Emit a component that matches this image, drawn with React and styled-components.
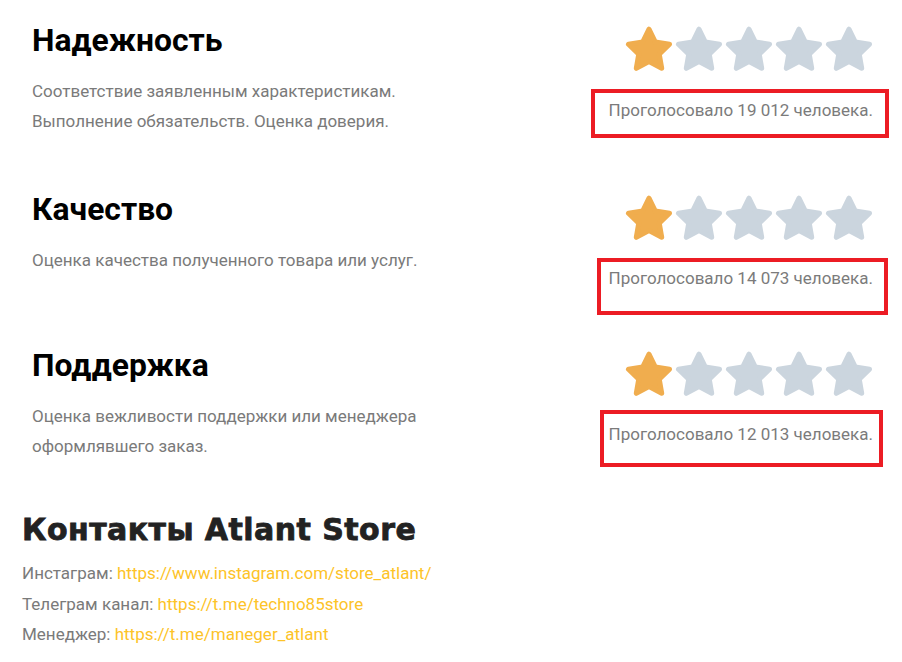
import React from "react";
import styled, { createGlobalStyle } from "styled-components";

const Global = createGlobalStyle`
  html, body { margin: 0; padding: 0; background: #fff; }
  body { font-family: Roboto, "Noto Sans", sans-serif; }
`;

const Page = styled.div`
  width: 902px;
  height: 662px;
  box-sizing: border-box;
  padding: 22px 13px 0 22px;
  overflow: hidden;
`;

const Ratings = styled.div`
  display: flex;
  flex-direction: column;
  padding-left: 10px;
`;

const Section = styled.section`
  display: flex;
  justify-content: space-between;
  align-items: flex-start;
  margin-top: ${(p) => p.$gap || 0}px;
`;

const Info = styled.div`
  display: flex;
  flex-direction: column;
`;

const Title = styled.h2`
  margin: 0;
  font-family: Roboto, sans-serif;
  font-weight: 700;
  font-size: 31.8px;
  line-height: 36px;
  color: #000;
`;

const Desc = styled.p`
  margin: 18px 0 0;
  font-size: 17px;
  line-height: 30px;
  color: #7a7a7a;
`;

const Side = styled.div`
  display: flex;
  flex-direction: column;
  align-items: flex-end;
`;

const Stars = styled.div`
  display: flex;
  gap: 2px;
  margin: 4px 16px 0 0;
`;

const VoteBox = styled.div`
  border: 4px solid #ec1c24;
  margin-top: ${(p) => p.$top}px;
  margin-right: ${(p) => p.$right}px;
  padding: ${(p) => p.$pad};
  font-size: 17px;
  line-height: 20px;
  color: #7b7b7b;
  white-space: nowrap;
`;

const Contacts = styled.div`
  margin-top: 45px;
`;

const ContactsTitle = styled.h2`
  margin: 0;
  font-family: "DejaVu Sans", "Liberation Sans", sans-serif;
  font-weight: 700;
  font-size: 30px;
  line-height: 36px;
  color: #222;
  -webkit-text-stroke: 0.8px #222;
  letter-spacing: 0.45px;
`;

const ContactList = styled.div`
  margin-top: 10px;
  display: flex;
  flex-direction: column;
`;

const ContactLine = styled.div`
  font-size: 17px;
  line-height: 30.5px;
  color: #7a7a7a;
`;

const Link = styled.a`
  color: #fdc328;
  text-decoration: none;
`;

const StarIcon = ({ on }) => (
  <svg width="48" height="48" viewBox="0 0 24 24">
    <polygon
      points="12,1.6 15.17,8.03 22.27,9.06 17.13,14.07 18.35,21.14 12,17.8 5.65,21.14 6.87,14.07 1.73,9.06 8.83,8.03"
      fill={on ? "#f0ad4e" : "#cbd5de"}
      stroke={on ? "#f0ad4e" : "#cbd5de"}
      strokeWidth="2.5"
      strokeLinejoin="round"
    />
  </svg>
);

const Rating = ({ value }) => (
  <Stars>
    {[1, 2, 3, 4, 5].map((i) => (
      <StarIcon key={i} on={i <= value} />
    ))}
  </Stars>
);

const items = [
  {
    title: "Надежность",
    desc: ["Соответствие заявленным характеристикам.", "Выполнение обязательств. Оценка доверия."],
    votes: "19 012",
    gap: 0,
    box: { top: 15, right: 0, pad: "7px 12px 14px 14px" },
  },
  {
    title: "Качество",
    desc: ["Оценка качества полученного товара или услуг."],
    votes: "14 073",
    gap: 53,
    box: { top: 15, right: 1, pad: "6px 11px 23px 8px" },
  },
  {
    title: "Поддержка",
    desc: ["Оценка вежливости поддержки или менеджера", "оформлявшего заказ."],
    votes: "12 013",
    gap: 32,
    box: { top: 11, right: 6, pad: "10px 6px 19px 5px" },
  },
];

export default function App() {
  return (
    <>
      <Global />
      <Page>
        <Ratings>
          {items.map((it) => (
            <Section key={it.title} $gap={it.gap}>
              <Info>
                <Title>{it.title}</Title>
                <Desc>
                  {it.desc.map((d, i) => (
                    <React.Fragment key={i}>
                      {i > 0 && <br />}
                      {d}
                    </React.Fragment>
                  ))}
                </Desc>
              </Info>
              <Side>
                <Rating value={1} />
                <VoteBox $top={it.box.top} $right={it.box.right} $pad={it.box.pad}>
                  Проголосовало {it.votes} человека.
                </VoteBox>
              </Side>
            </Section>
          ))}
        </Ratings>
        <Contacts>
          <ContactsTitle>Контакты Atlant Store</ContactsTitle>
          <ContactList>
            <ContactLine>
              Инстаграм: <Link href="#">https://www.instagram.com/store_atlant/</Link>
            </ContactLine>
            <ContactLine>
              Телеграм канал: <Link href="#">https://t.me/techno85store</Link>
            </ContactLine>
            <ContactLine>
              Менеджер: <Link href="#">https://t.me/maneger_atlant</Link>
            </ContactLine>
          </ContactList>
        </Contacts>
      </Page>
    </>
  );
}
